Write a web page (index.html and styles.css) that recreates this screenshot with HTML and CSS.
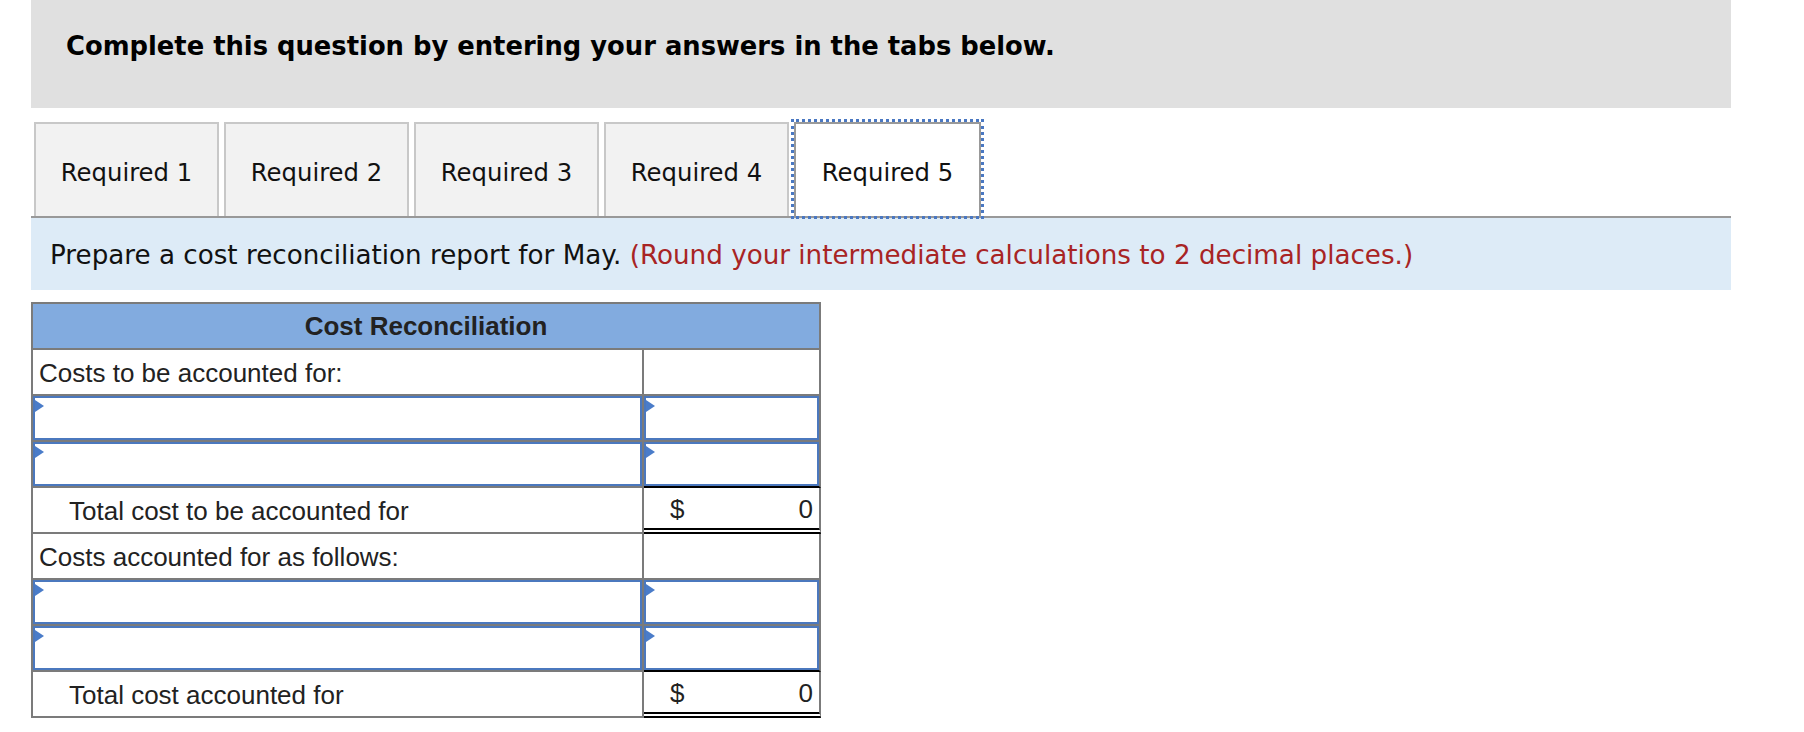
FILE: index.html
```html
<!DOCTYPE html>
<html lang="en">
<head>
<meta charset="utf-8">
<title>Cost Reconciliation</title>
<link rel="stylesheet" href="styles.css">
</head>
<body>
<div class="page">
  <div class="banner">
    <h1 class="banner-title">Complete this question by entering your answers in the tabs below.</h1>
  </div>

  <div class="tabs">
    <div class="tab">Required 1</div>
    <div class="tab">Required 2</div>
    <div class="tab">Required 3</div>
    <div class="tab">Required 4</div>
    <div class="tab tab-active">Required 5</div>
  </div>

  <div class="instructions">
    Prepare a cost reconciliation report for May. <span class="hint">(Round your intermediate calculations to 2 decimal places.)</span>
  </div>

  <div class="recon">
    <div class="cell head">Cost Reconciliation</div>

    <div class="cell label">Costs to be accounted for:</div>
    <div class="cell"></div>

    <div class="cell input-cell"><div class="inp"></div></div>
    <div class="cell input-cell"><div class="inp"></div></div>

    <div class="cell input-cell"><div class="inp"></div></div>
    <div class="cell input-cell above-total"><div class="inp"></div></div>

    <div class="cell label indent">Total cost to be accounted for</div>
    <div class="cell total"><span>$</span><span>0</span></div>

    <div class="cell label">Costs accounted for as follows:</div>
    <div class="cell"></div>

    <div class="cell input-cell"><div class="inp"></div></div>
    <div class="cell input-cell"><div class="inp"></div></div>

    <div class="cell input-cell"><div class="inp"></div></div>
    <div class="cell input-cell above-total"><div class="inp"></div></div>

    <div class="cell label indent">Total cost accounted for</div>
    <div class="cell total"><span>$</span><span>0</span></div>
  </div>
</div>
</body>
</html>
```

FILE: styles.css
```css
html, body {
  margin: 0;
  padding: 0;
  background: #ffffff;
}

body {
  font-family: "DejaVu Sans", Verdana, sans-serif;
  color: #111;
}

.page {
  width: 1700px;
  padding-left: 31px;
}

.banner {
  height: 108px;
  background: #e0e0e0;
  box-sizing: border-box;
  padding: 30px 0 0 35px;
}

.banner-title {
  margin: 0;
  font-size: 25.8px;
  line-height: 32px;
  font-weight: bold;
  color: #000;
}

.tabs {
  display: flex;
  gap: 5px;
  margin-top: 14px;
  padding-left: 3px;
  border-bottom: 2px solid #999;
}

.tab {
  box-sizing: border-box;
  width: 185px;
  height: 94px;
  border: 2px solid #c8c8c8;
  border-bottom: 0;
  background: #f2f2f2;
  display: flex;
  align-items: center;
  justify-content: center;
  font-size: 24.3px;
  color: #111;
  padding-top: 4px;
}

.tab-active {
  background: #fff;
  border: 2px solid #999;
  border-bottom: 0;
  outline: 3px dotted #4a78c2;
  outline-offset: 0;
  width: 187px;
  position: relative;
}

.instructions {
  height: 72px;
  line-height: 74px;
  background: #ddebf7;
  padding-left: 19px;
  font-size: 26.2px;
  color: #111;
  box-sizing: border-box;
  overflow: hidden;
}

.hint {
  color: #a82424;
}

.recon {
  margin-top: 12px;
  width: 790px;
  box-sizing: border-box;
  display: grid;
  grid-template-columns: 611px 177px;
  border-top: 2px solid #7b7b7b;
  border-left: 2px solid #7b7b7b;
  font-family: "Liberation Sans", Arial, sans-serif;
  color: #222;
}

.cell {
  box-sizing: border-box;
  height: 46px;
  border-right: 2px solid #7b7b7b;
  border-bottom: 2px solid #7b7b7b;
  background: #fff;
}

.head {
  grid-column: 1 / span 2;
  background: #82abdf;
  font-weight: bold;
  font-size: 26px;
  display: flex;
  align-items: center;
  justify-content: center;
  padding-top: 1px;
}

.label {
  font-size: 26px;
  display: flex;
  align-items: center;
  padding-left: 6px;
  padding-top: 2px;
}

.indent {
  padding-left: 36px;
}

.input-cell {
  padding: 0;
}

.above-total {
  border-bottom-color: #000;
}

.inp {
  position: relative;
  box-sizing: border-box;
  height: 100%;
  border: 2px solid #4b78be;
}

.inp::before {
  content: "";
  position: absolute;
  left: 0;
  top: 2px;
  border-top: 6px solid transparent;
  border-bottom: 6px solid transparent;
  border-left: 9px solid #4a7cc9;
}

.total {
  border-bottom: 6px double #000;
  display: flex;
  align-items: center;
  justify-content: space-between;
  padding: 3px 6px 0 26px;
  font-size: 26px;
}
```
